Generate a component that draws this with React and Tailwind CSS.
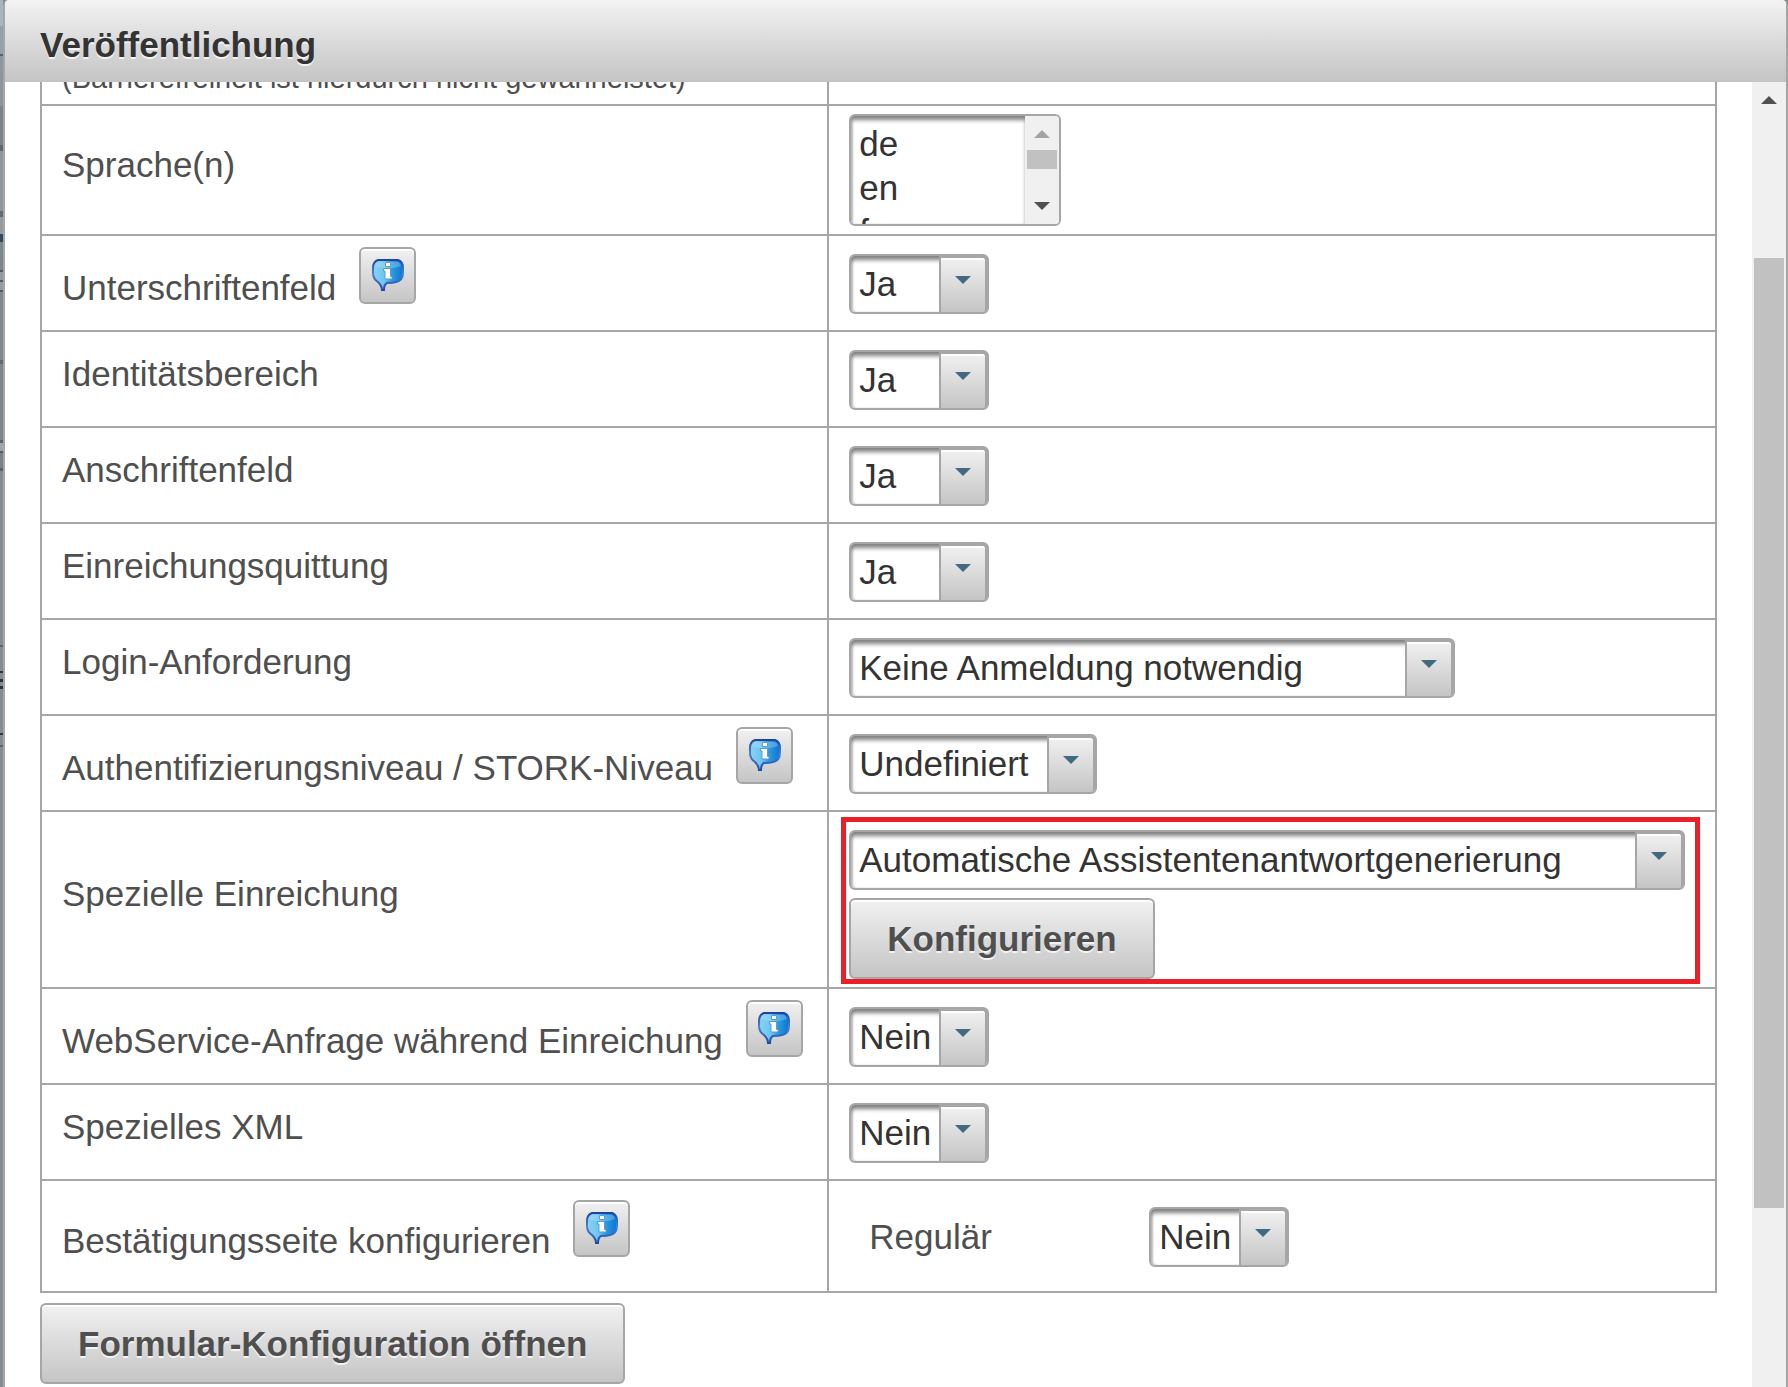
import React, { useState } from "react";

const yesNo = ["Ja", "Nein"];

// visible edge of the page behind the dialog: [height, color]
const backdropEdge = [
  [26, "#a3b6c1"],
  [28, "#93a2aa"],
  [2, "#566269"],
  [50, "#8b979c"],
  [39, "#78848a"],
  [6, "#5f6a70"],
  [60, "#8e999e"],
  [6, "#626d73"],
  [17, "#929da2"],
  [8, "#2f4a5f"],
  [28, "#7d888d"],
  [2, "#525d63"],
  [8, "#929da2"],
  [2, "#525d63"],
  [8, "#929da2"],
  [2, "#525d63"],
  [68, "#7f8a8f"],
  [4, "#606b70"],
  [76, "#7c878c"],
  [3, "#59646a"],
  [8, "#9da8ad"],
  [2, "#525d63"],
  [15, "#77828a"],
  [3, "#59646a"],
  [174, "#838e93"],
  [2, "#59646a"],
  [24, "#838e93"],
  [2, "#2b353b"],
  [6, "#838e93"],
  [3, "#2b353b"],
  [4, "#838e93"],
  [3, "#2b353b"],
  [44, "#838e93"],
  [2, "#2b353b"],
  [10, "#838e93"],
  [2, "#59646a"],
];

const InfoIcon = () => (
  <svg width="32" height="32" viewBox="0 0 32 32" aria-hidden="true">
    <defs>
      <linearGradient id="bubbleFill" x1="0" y1="0" x2="1" y2="0">
        <stop offset="0" stopColor="#8ad3f3" />
        <stop offset="0.4" stopColor="#6cc4f0" />
        <stop offset="0.6" stopColor="#2a9fe4" />
        <stop offset="1" stopColor="#1173cf" />
      </linearGradient>
      <linearGradient id="bubbleEdge" x1="0" y1="0" x2="0" y2="1">
        <stop offset="0" stopColor="#22429c" />
        <stop offset="0.45" stopColor="#4585d4" />
        <stop offset="1" stopColor="#2148a8" />
      </linearGradient>
    </defs>
    <path
      d="M6 1h20c3 1 5 4 5 8v5c0 5-3 8-7 9-3 1-7 1-9 1-2 1-3 3-3 7h-2c0-3-2-6-4-8-3-2-5-5-5-9V9c0-4 2-7 5-8z"
      fill="url(#bubbleFill)"
      stroke="url(#bubbleEdge)"
      strokeWidth="2"
    />
    <path d="M3 7c1-3 2-4 4-4h18c2 0 3 1 4 4-8 3-18 3-26 0z" fill="#bfe8ff" opacity="0.3" />
    <path
      d="M13.500 3.500h5v4h-5zM11.500 9.500h7v8h1.500v2.500h-7v-8h-1.500z"
      fill="#fff"
      stroke="#5d9bd6"
      strokeWidth="1"
    />
  </svg>
);

const InfoButton = ({ label }) => (
  <button
    type="button"
    aria-label={`Info: ${label}`}
    className="flex h-[57px] w-[57px] shrink-0 justify-center rounded-md border-2 border-[#a6a6a6] bg-linear-to-b from-[#f1f1f1] to-[#c5c5c5] pt-[10px] shadow-[inset_0_2px_0_#ffffff]"
  >
    <InfoIcon />
  </button>
);

const Arrow = ({ up, className }) => (
  <svg width="16" height="8" viewBox="0 0 16 8" className={className} aria-hidden="true">
    <path d={up ? "M0 8l8-8 8 8z" : "M0 0h16l-8 8z"} fill="currentColor" />
  </svg>
);

const SelectBox = ({ id, options, width }) => {
  const [value, setValue] = useState(options[0]);

  return (
    <div
      className={`relative h-[60px] max-w-full rounded-md border-2 border-[#a6a6a6] bg-white shadow-[inset_0_5px_4px_-1px_#808080,inset_2px_0_2px_#cccccc] ${width}`}
    >
      <select
        id={id}
        value={value}
        onChange={(e) => setValue(e.target.value)}
        className="h-full w-full appearance-none bg-transparent pr-12 pl-2 text-[#333333] outline-none"
      >
        {options.map((option) => (
          <option key={option}>{option}</option>
        ))}
      </select>
      <span className="pointer-events-none absolute inset-y-0 right-0 flex w-12 justify-center rounded-r border-t-2 border-r-2 border-l-2 border-[#a6a6a6] bg-linear-to-b from-[#f1f1f1] to-[#c5c5c5] pt-[18px] shadow-[inset_0_2px_0_#ffffff]">
        <Arrow className="text-[#3f6a80]" />
      </span>
    </div>
  );
};

const LanguageList = ({ id }) => (
  <div className="flex h-28 w-[212px] overflow-hidden rounded-md border-2 border-[#a6a6a6] bg-white">
    <select
      id={id}
      multiple
      className="h-full min-w-0 flex-1 overflow-hidden px-[6px] pt-2 text-[#333333] shadow-[inset_0_5px_4px_-1px_#808080,inset_2px_0_2px_#cccccc] outline-none [scrollbar-width:none]"
    >
      {["de", "en", "fr"].map((language) => (
        <option key={language} className="h-11 p-0 px-[2px] leading-11">
          {language}
        </option>
      ))}
    </select>
    <div className="flex w-[34px] flex-col items-center bg-[#f0f0f0]">
      <Arrow up className="mt-[14px] text-[#a3a3a3]" />
      <div className="mt-3 h-[19px] w-[30px] bg-[#c1c1c1]" />
      <Arrow className="mt-[33px] text-[#505050]" />
    </div>
  </div>
);

const PushButton = ({ children }) => (
  <button
    type="button"
    className="h-[81px] rounded-md border-2 border-[#a6a6a6] bg-linear-to-b from-[#f1f1f1] to-[#c5c5c5] px-9 font-bold text-[#4f4f4f] shadow-[inset_0_2px_0_#ffffff] [text-shadow:0_2px_0_#f3f3f3]"
  >
    {children}
  </button>
);

const Row = ({ id, label, info, cell = "pt-[18px] pb-4", children }) => (
  <tr>
    <td className="border-2 border-[#a6a6a6] px-5 pb-[11px]">
      <div className="flex items-start gap-[23px]">
        <label htmlFor={id} className={info ? "mt-[21px] whitespace-nowrap" : ""}>
          {label}
        </label>
        {info && <InfoButton label={label} />}
      </div>
    </td>
    <td className={`border-2 border-[#a6a6a6] px-5 ${cell}`}>{children}</td>
  </tr>
);

const App = () => (
  <div className="flex h-screen overflow-hidden bg-[#838e93] font-['Liberation_Sans',Arial,sans-serif] text-[35px] leading-10 text-[#4f4f4f]">
    <div className="flex w-[3px] shrink-0 flex-col">
      {backdropEdge.map(([height, color], index) => (
        <div key={index} className="shrink-0" style={{ height, backgroundColor: color }} />
      ))}
    </div>
    <div className="flex min-w-0 flex-1 flex-col rounded-t-md border-x-2 border-[#a6a6a6] bg-white">
      <header className="flex h-[82px] shrink-0 items-center rounded-t bg-linear-to-b from-[#f3f3f3] to-[#c4c4c4] px-[35px] pt-2">
        <h1 className="font-bold text-[#333333] [text-shadow:0_2px_0_#f3f3f3]">Veröffentlichung</h1>
      </header>

      <div className="flex min-h-0 flex-1">
        <main className="min-w-0 flex-1 overflow-hidden px-[35px]">
          <table className="w-full table-fixed border-collapse">
            <colgroup>
              <col className="w-[47%]" />
              <col />
            </colgroup>
            <tbody>
              <tr>
                <td className="border-2 border-t-0 border-[#a6a6a6] px-5">
                  {/* scrolled halfway under the header */}
                  <div className="flex h-[22px] items-end overflow-hidden pb-3 text-[29px] leading-7 whitespace-nowrap">
                    (Barrierefreiheit ist hierdurch nicht gewährleistet)
                  </div>
                </td>
                <td className="border-2 border-t-0 border-[#a6a6a6]" />
              </tr>
              <Row id="sprachen" label="Sprache(n)" cell="py-2">
                <LanguageList id="sprachen" />
              </Row>
              <Row id="unterschrift" label="Unterschriftenfeld" info>
                <SelectBox id="unterschrift" options={yesNo} width="w-[140px]" />
              </Row>
              <Row id="identitaet" label="Identitätsbereich">
                <SelectBox id="identitaet" options={yesNo} width="w-[140px]" />
              </Row>
              <Row id="anschrift" label="Anschriftenfeld">
                <SelectBox id="anschrift" options={yesNo} width="w-[140px]" />
              </Row>
              <Row id="quittung" label="Einreichungsquittung">
                <SelectBox id="quittung" options={yesNo} width="w-[140px]" />
              </Row>
              <Row id="login" label="Login-Anforderung">
                <SelectBox id="login" options={["Keine Anmeldung notwendig"]} width="w-[606px]" />
              </Row>
              <Row id="stork" label="Authentifizierungsniveau / STORK-Niveau" info>
                <SelectBox id="stork" options={["Undefiniert"]} width="w-[248px]" />
              </Row>
              <Row id="speziell" label="Spezielle Einreichung" cell="pt-[18px] pb-2">
                <div className="relative">
                  <div className="flex flex-col items-start gap-2">
                    <SelectBox
                      id="speziell"
                      options={["Automatische Assistentenantwortgenerierung"]}
                      width="w-[836px]"
                    />
                    <PushButton>Konfigurieren</PushButton>
                  </div>
                  <div className="pointer-events-none absolute -top-[13px] -right-[5px] -bottom-[5px] -left-2 border-[5px] border-[#ea1f27]" />
                </div>
              </Row>
              <Row id="webservice" label="WebService-Anfrage während Einreichung" info>
                <SelectBox id="webservice" options={["Nein", "Ja"]} width="w-[140px]" />
              </Row>
              <Row id="xml" label="Spezielles XML">
                <SelectBox id="xml" options={["Nein", "Ja"]} width="w-[140px]" />
              </Row>
              <Row
                id="regulaer"
                label="Bestätigungsseite konfigurieren"
                info
                cell="pt-[26px] pb-6"
              >
                <div className="flex items-center pl-5">
                  <span className="w-[280px]">Regulär</span>
                  <SelectBox id="regulaer" options={["Nein", "Ja"]} width="w-[140px]" />
                </div>
              </Row>
            </tbody>
          </table>
          <div className="mt-[10px]">
            <PushButton>Formular-Konfiguration öffnen</PushButton>
          </div>
        </main>

        <div className="flex w-[34px] shrink-0 flex-col items-center bg-[#f0f0f0]">
          <Arrow up className="mt-[14px] shrink-0 text-[#505050]" />
          <div className="mt-[154px] h-[950px] w-[30px] bg-[#c1c1c1]" />
        </div>
      </div>
    </div>
  </div>
);

export default App;
